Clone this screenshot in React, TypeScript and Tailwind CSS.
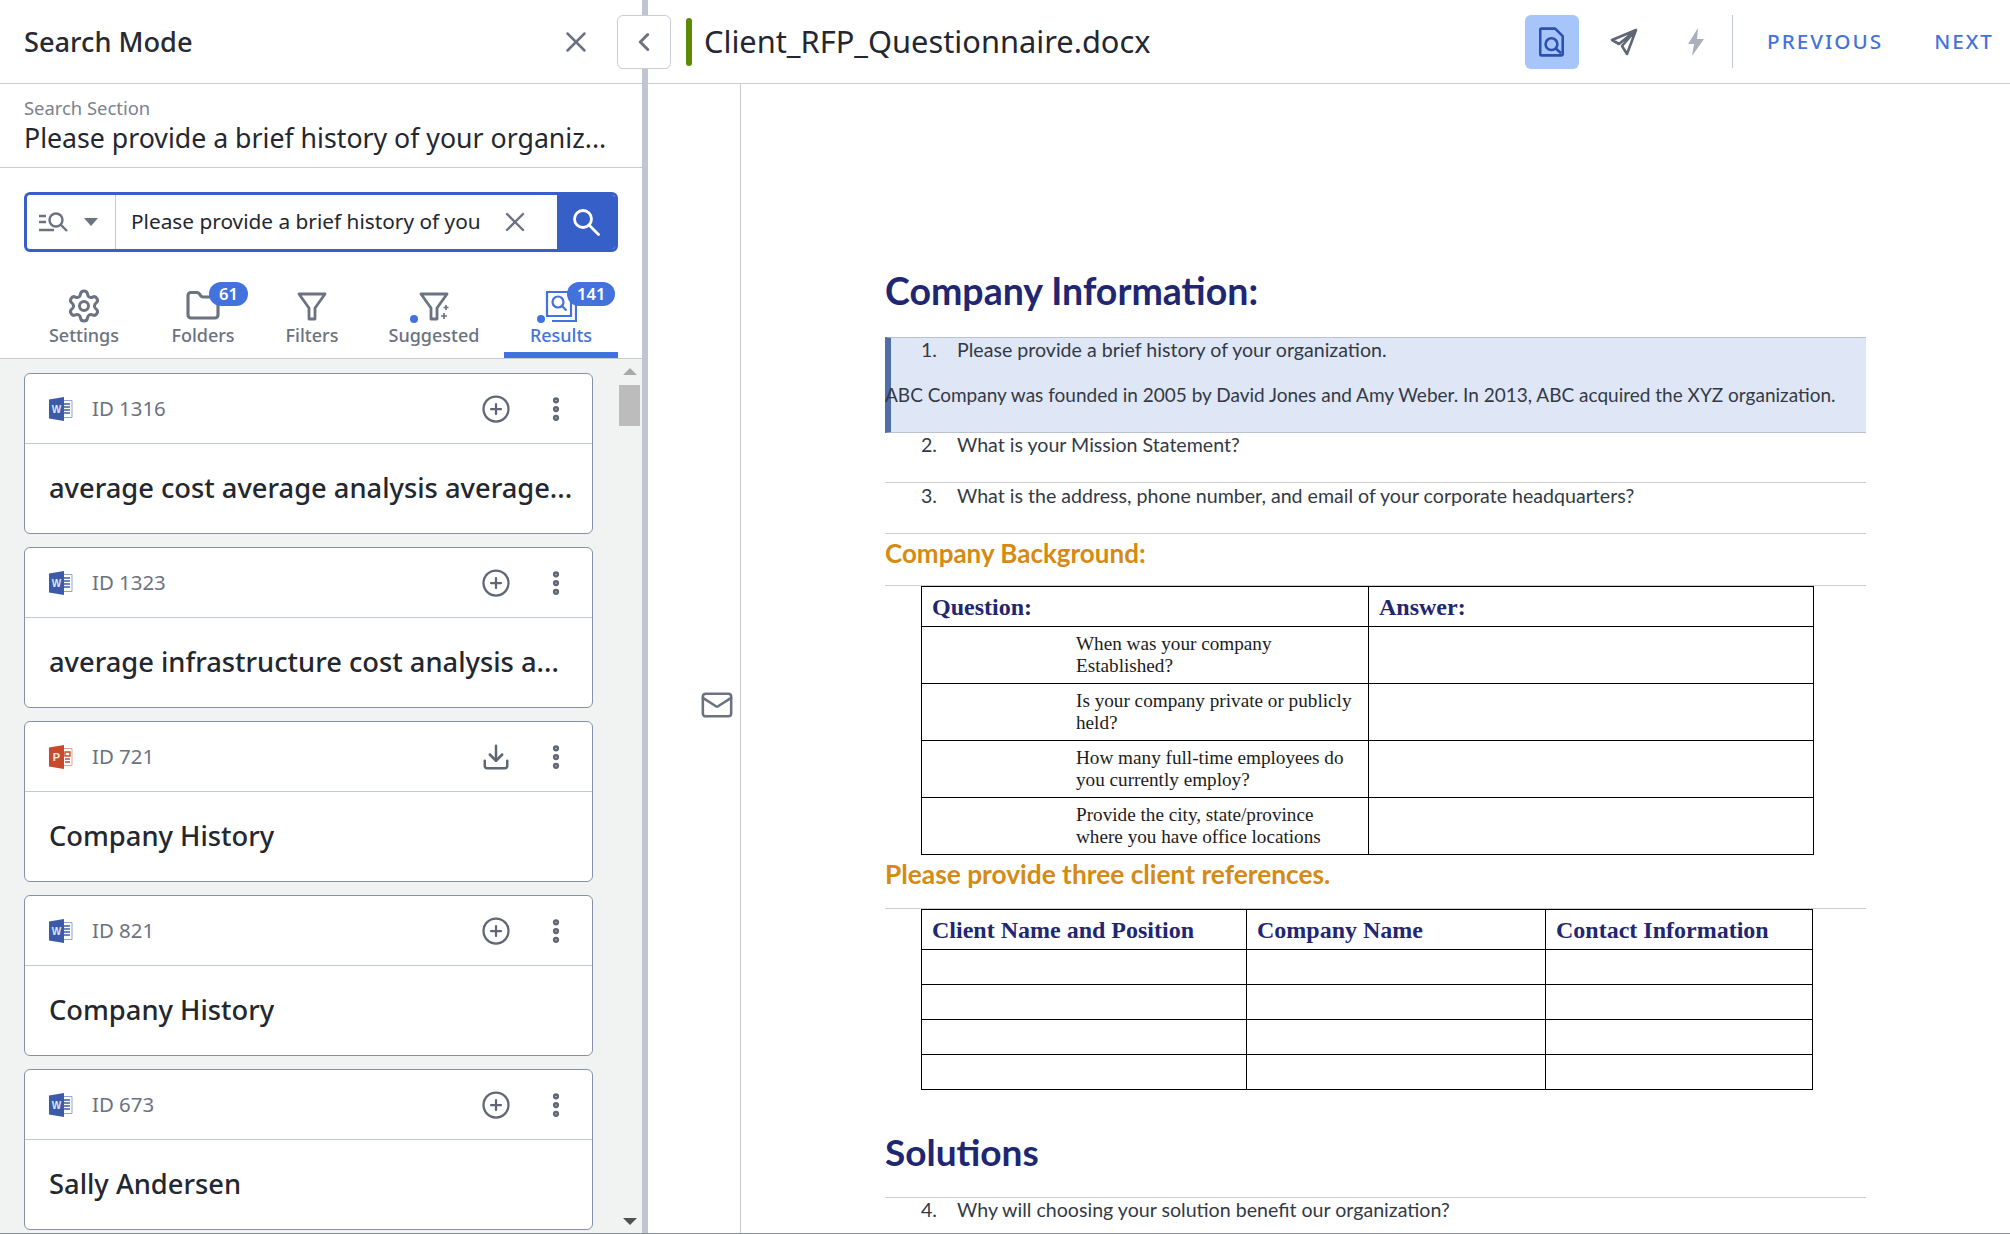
import { ChevronLeft, CirclePlus, Download, EllipsisVertical, Folder, Mail, Settings, X } from "lucide-react"

const results = [
  { id: "ID 1316", kind: "word", title: "average cost average analysis average..." },
  { id: "ID 1323", kind: "word", title: "average infrastructure cost analysis a..." },
  { id: "ID 721", kind: "ppt", title: "Company History" },
  { id: "ID 821", kind: "word", title: "Company History" },
  { id: "ID 673", kind: "word", title: "Sally Andersen" },
]

function WordIcon() {
  return (
    <svg viewBox="0 0 24 24" className="size-6 shrink-0">
      <path d="M12 3.5h11v17H12" fill="#fff" stroke="#8fa5d2" strokeWidth="1" />
      <path d="M15 7h6M15 10h6M15 13h6M15 16h6" stroke="#3f5fa8" strokeWidth="1.4" />
      <path d="M0 2.5 15 0v24L0 21.5z" fill="#3b5ba9" />
      <text x="7.5" y="15.5" textAnchor="middle" fontSize="10" fontWeight="700" fill="#dfe6f5" fontFamily="Liberation Sans, sans-serif">W</text>
    </svg>
  )
}

function PptIcon() {
  return (
    <svg viewBox="0 0 24 24" className="size-6 shrink-0">
      <path d="M12 3.5h11v17H12" fill="#fff" stroke="#e0a593" strokeWidth="1" />
      <path d="M16 7h5v4h-5zM16 14h5M16 17h5" fill="none" stroke="#c9492c" strokeWidth="1.4" />
      <path d="M0 2.5 15 0v24L0 21.5z" fill="#c9492c" />
      <text x="7.5" y="16" textAnchor="middle" fontSize="11" fontWeight="700" fill="#fbe9e3" fontFamily="Liberation Sans, sans-serif">P</text>
    </svg>
  )
}

function FunnelIcon({ sparkle }: { sparkle?: boolean }) {
  return (
    <svg viewBox="0 0 32 32" className="size-8" fill="none" stroke="#6b7280" strokeWidth="2.8" strokeLinejoin="round">
      <path d="M3 4h26l-10 14v11h-6V18z" />
      {sparkle && <path d="M28 15v5M25.5 17.5h5M26 23v6M23 26h6" strokeWidth="1.7" />}
    </svg>
  )
}

function Tab({ label, center, active, badge, dot, children }: any) {
  return (
    <div className={`relative flex h-full flex-col items-center pt-[13px] ${center}`}>
      <div className="relative flex h-[35px] items-center justify-center">
        {children}
        {dot && <span className="absolute -left-[8px] bottom-0 size-2 rounded-full bg-[#4472dc]" />}
        {badge && (
          <span className="absolute -top-[6px] left-[calc(50%+6px)] flex h-6 items-center rounded-full bg-[#4472dc] px-[10px] text-[16.5px] font-semibold text-white">
            {badge}
          </span>
        )}
      </div>
      <span className={`text-[18px] leading-6 font-medium ${active ? "text-[#4472dc]" : "text-[#6b7280]"}`}>{label}</span>
    </div>
  )
}

function ResultCard({ id, kind, title }: any) {
  return (
    <div className="h-[161px] shrink-0 rounded-md border border-[#8791a5] bg-white">
      <div className="flex h-[70px] items-center border-b border-[#c3c9d4] pr-[21px] pl-[24px]">
        {kind === "ppt" ? <PptIcon /> : <WordIcon />}
        <span className="ml-[19px] text-[20.4px] text-[#6b7280]">{id}</span>
        <span className="ml-auto flex w-[30px] justify-center text-[#5f6775]">
          {kind === "ppt" ? <Download size={30} strokeWidth={2} /> : <CirclePlus size={36} strokeWidth={1.8} />}
        </span>
        <EllipsisVertical size={30} strokeWidth={3} className="ml-[30px] text-[#5f6775]" />
      </div>
      <div className="flex h-[89px] items-center pl-[24px]">
        <p className="text-[27.3px] font-medium whitespace-nowrap text-[#23272f]">{title}</p>
      </div>
    </div>
  )
}

function QuestionRow({ num, text, className }: any) {
  return (
    <div className={`flex pl-[36px] text-[19.6px] leading-[23px] text-[#333a45] ${className}`}>
      <span className="w-[36px]">{num}</span>
      <span>{text}</span>
    </div>
  )
}

export default function App() {
  return (
    <div className="flex h-[1234px] w-[2010px] flex-col overflow-hidden bg-white font-['Noto_Sans',sans-serif]">
      <div className="flex min-h-0 flex-1">
        {/* left search panel */}
        <aside className="flex w-[642px] shrink-0 flex-col">
          <div className="flex h-[84px] shrink-0 items-center justify-between border-b border-[#c9ccd1] pt-px pr-[49px] pl-[24px]">
            <h1 className="text-[27.2px] font-medium text-[#262a33]">Search Mode</h1>
            <X size={34} strokeWidth={1.8} className="text-[#6b7280]" />
          </div>
          <div className="h-[84px] shrink-0 border-b border-[#c9ccd1] pt-[12px] pl-[24px]">
            <div className="text-[18.4px] leading-6 text-[#7b828e]">Search Section</div>
            <div className="text-[26.7px] leading-[36px] whitespace-nowrap text-[#23272f]">Please provide a brief history of your organiz...</div>
          </div>
          <div className="shrink-0 px-[24px] pt-[24px]">
            <div className="flex h-[60px] w-[594px] overflow-hidden rounded-md border-[3px] border-[#365fc7]">
              <div className="flex w-[89px] items-center border-r border-[#c3c9d4] pl-[11px]">
                <svg viewBox="0 0 32 24" className="h-[24px] w-[32px]" fill="none" stroke="#6b7280" strokeWidth="2.4">
                  <path d="M1 6h7M1 12h7M1 20h15" />
                  <circle cx="18" cy="10" r="6.5" />
                  <path d="m23 15 6 6" />
                </svg>
                <span className="ml-[14px] h-0 w-0 border-x-[7px] border-t-[8px] border-x-transparent border-t-[#6b7280]" />
              </div>
              <div className="flex flex-1 items-center pl-[15px]">
                <span className="w-[368px] text-[20.8px] whitespace-nowrap text-[#23272f]">Please provide a brief history of you</span>
                <X size={32} strokeWidth={1.8} className="text-[#6b7280]" />
              </div>
              <div className="flex w-[58px] items-center justify-center bg-[#365fc7]">
                <svg viewBox="0 0 28 28" className="size-[28px]" fill="none" stroke="#fff" strokeWidth="2.8">
                  <circle cx="11" cy="11" r="8.5" />
                  <path d="m17 17 9.5 9.5" strokeLinecap="round" />
                </svg>
              </div>
            </div>
          </div>
          <div className="relative mt-[23px] flex h-[84px] shrink-0 border-b border-[#c9ccd1] pl-[24px]">
            <Tab label="Settings" center="w-[120px]">
              <Settings size={36} strokeWidth={2} className="text-[#6b7280]" />
            </Tab>
            <Tab label="Folders" center="ml-[17px] w-[84px]" badge="61">
              <Folder size={36} strokeWidth={2.1} className="text-[#6b7280]" />
            </Tab>
            <Tab label="Filters" center="ml-[26px] w-[82px]">
              <FunnelIcon />
            </Tab>
            <Tab label="Suggested" center="ml-[26px] w-[110px]" dot>
              <FunnelIcon sparkle />
            </Tab>
            <Tab label="Results" center="ml-[15px] w-[114px] border-b-[6px] border-[#4472dc]" active dot badge="141">
              <svg viewBox="0 0 32 32" className="size-8" fill="none" stroke="#4472dc" strokeWidth="2.2">
                <path d="M2 2h24v24H2z" />
                <path d="M7 31h24V8" />
                <circle cx="13" cy="12" r="5.5" />
                <path d="m17 16 4.5 4.5" />
              </svg>
            </Tab>
          </div>
          <div className="flex min-h-0 flex-1 bg-[#f1f2f2]">
            <div className="flex w-[593px] flex-col gap-[13px] overflow-hidden pt-[14px] pl-[24px]">
              {results.map((r) => (
                <ResultCard key={r.id} {...r} />
              ))}
            </div>
            <div className="ml-[26px] flex w-[21px] flex-col items-center pt-[9px] pb-[8px]">
              <span className="h-0 w-0 border-x-[7px] border-b-[7px] border-x-transparent border-b-[#a9a9a9]" />
              <span className="mt-[10px] h-[41px] w-[21px] bg-[#bcbcbc]" />
              <span className="mt-auto h-0 w-0 border-x-[7px] border-t-[7px] border-x-transparent border-t-[#505050]" />
            </div>
          </div>
        </aside>

        {/* drag divider with collapse button */}
        <div className="relative w-[6px] shrink-0 bg-[#c0c6cf]">
          <button className="absolute top-[15px] -left-[25px] flex h-[54px] w-[54px] items-center justify-center rounded-md border border-[#c9cdd4] bg-white text-[#6b7280]">
            <ChevronLeft size={30} strokeWidth={2.4} />
          </button>
        </div>

        <main className="flex min-w-0 flex-1 flex-col">
          <header className="flex h-[84px] shrink-0 items-center border-b border-[#c9ccd1] pr-[16px] pl-[38px]">
            <span className="h-[48px] w-[6px] rounded-full bg-[#5c8a07]" />
            <h2 className="ml-[12px] text-[30.8px] text-[#23272f]">Client_RFP_Questionnaire.docx</h2>
            <div className="ml-auto flex size-[54px] items-center justify-center rounded-md bg-[#a6c5fb]">
              <svg viewBox="0 0 24 28" className="h-[30px] w-[26px]" fill="none" stroke="#2c4fb0" strokeWidth="2.4" strokeLinejoin="round">
                <path d="M2 1.5h13l7 7v17a1 1 0 0 1-1 1H2a1 1 0 0 1-1-1v-23a1 1 0 0 1 1-1z" />
                <circle cx="11.5" cy="16" r="5.5" />
                <path d="m15.5 20 5 4.5" />
              </svg>
            </div>
            <svg viewBox="0 0 28 28" className="ml-[31px] size-[28px]" fill="none" stroke="#5f6775" strokeWidth="2.6" strokeLinejoin="round">
              <path d="M26 2 2 12l7 4zM26 2 17 26l-5-8zM26 2 9 16M26 2 12 18" />
            </svg>
            <svg viewBox="0 0 16 28" className="ml-[50px] h-[28px] w-[16px]" fill="#a9b0ba">
              <path d="M10 0 0 16h6L4 28l12-17H9z" />
            </svg>
            <span className="ml-[28px] h-[53px] w-px bg-[#c3c9d4]" />
            <span className="ml-[34px] text-[20.7px] font-medium tracking-[2px] text-[#4472dc]">PREVIOUS</span>
            <span className="ml-[51px] text-[20.7px] font-medium tracking-[2px] text-[#4472dc]">NEXT</span>
          </header>

          <div className="flex min-h-0 flex-1">
            <div className="flex w-[93px] shrink-0 items-center justify-end border-r border-[#c9ccd1] pt-[92px] pr-[6px]">
              <Mail size={34} strokeWidth={1.8} className="text-[#6b7280]" />
            </div>

            {/* document */}
            <div className="flex-1 overflow-hidden pt-[183px] pr-[144px] pl-[144px] font-['Lato',sans-serif]">
              <h3 className="h-[48px] text-[37.5px] leading-[48px] font-bold text-[#1f2672]">Company Information:</h3>
              <div className="mt-[22px] h-[96px] border-y border-l-[6px] border-y-[#bcc3d0] border-l-[#4f6ea8] bg-[#dfe6f5]">
                <QuestionRow num="1." text="Please provide a brief history of your organization." className="-ml-[6px]" />
                <p className="mt-[22px] -ml-[6px] text-[19px] leading-[23px] text-[#333a45]">ABC Company was founded in 2005 by David Jones and Amy Weber. In 2013, ABC acquired the XYZ organization.</p>
              </div>
              <QuestionRow num="2." text="What is your Mission Statement?" className="h-[50px] border-b border-[#c9ccd1]" />
              <QuestionRow num="3." text="What is the address, phone number, and email of your corporate headquarters?" className="h-[51px] border-b border-[#c9ccd1] pt-px" />
              <h4 className="flex h-[52px] items-center border-b border-[#c9ccd1] pb-[12px] text-[26px] font-bold text-[#d68a12]">Company Background:</h4>
              <table className="ml-[36px] w-[893px] table-fixed border-collapse border border-black font-['Liberation_Serif',serif]">
                <thead>
                  <tr className="h-[40px] text-left text-[24px] text-[#1f2672]">
                    <th className="w-[447px] border border-black pl-[10px] font-bold">Question:</th>
                    <th className="border border-black pl-[10px] font-bold">Answer:</th>
                  </tr>
                </thead>
                <tbody className="text-[19.2px] leading-[22px] text-[#1c1c1c]">
                  {[
                    ["When was your company", "Established?"],
                    ["Is your company private or publicly", "held?"],
                    ["How many full-time employees do", "you currently employ?"],
                    ["Provide the city, state/province", "where you have office locations"],
                  ].map((q) => (
                    <tr key={q[0]} className="h-[57px]">
                      <td className="border border-black pl-[154px]">
                        {q[0]}
                        <br />
                        {q[1]}
                      </td>
                      <td className="border border-black" />
                    </tr>
                  ))}
                </tbody>
              </table>
              <h4 className="flex h-[54px] items-center border-b border-[#c9ccd1] pb-[14px] text-[26.3px] font-bold text-[#d68a12]">Please provide three client references.</h4>
              <table className="ml-[36px] w-[892px] table-fixed border-collapse border border-black font-['Liberation_Serif',serif]">
                <thead>
                  <tr className="h-[40px] text-left text-[24px] text-[#1f2672]">
                    <th className="w-[325px] border border-black pl-[10px] font-bold">Client Name and Position</th>
                    <th className="w-[299px] border border-black pl-[10px] font-bold">Company Name</th>
                    <th className="border border-black pl-[10px] font-bold">Contact Information</th>
                  </tr>
                </thead>
                <tbody>
                  {[1, 2, 3, 4].map((n) => (
                    <tr key={n} className="h-[35px]">
                      <td className="border border-black" />
                      <td className="border border-black" />
                      <td className="border border-black" />
                    </tr>
                  ))}
                </tbody>
              </table>
              <h3 className="mt-[37px] flex h-[71px] items-start border-b border-[#c9ccd1] text-[37px] leading-[50px] font-bold text-[#1f2672]">Solutions</h3>
              <QuestionRow num="4." text="Why will choosing your solution benefit our organization?" />
            </div>
          </div>
        </main>
      </div>
      <div className="h-px shrink-0 bg-[#8a8f96]" />
    </div>
  )
}
